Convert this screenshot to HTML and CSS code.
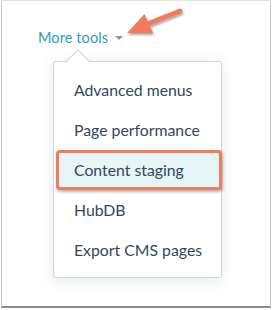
FILE: index.html
```html
<!DOCTYPE html>
<html lang="en">
<head>
    <meta charset="UTF-8">
    <title>More tools</title>
    <link rel="stylesheet" href="styles.css">
</head>
<body>
    <div class="frame">
        <div class="trigger">
            <span class="trigger-label">More tools</span>
            <span class="caret"></span>
        </div>
        <div class="dropdown">
            <ul class="menu">
                <li class="menu-item">Advanced menus</li>
                <li class="menu-item">Page performance</li>
                <li class="menu-item highlighted">Content staging</li>
                <li class="menu-item">HubDB</li>
                <li class="menu-item">Export CMS pages</li>
            </ul>
        </div>
        <!-- callout arrow pointing at the trigger -->
        <svg class="callout" width="272" height="60" viewBox="0 0 272 60">
            <defs>
                <filter id="shade" x="-20%" y="-20%" width="140%" height="160%">
                    <feDropShadow dx="1" dy="2" stdDeviation="1.2" flood-color="#000" flood-opacity="0.35"/>
                </filter>
            </defs>
            <g filter="url(#shade)">
                <line x1="180" y1="11" x2="146" y2="24.5" stroke="#f47a5c" stroke-width="5" stroke-linecap="round"/>
                <polygon points="127,33 144.5,14 153,33" fill="#f47a5c"/>
            </g>
        </svg>
    </div>
</body>
</html>
```

FILE: styles.css
```css
body {
    margin: 0;
    font-family: "Lato", "Open Sans", sans-serif;
    background: #fff;
}

.frame {
    position: relative;
    box-sizing: border-box;
    width: 270px;
    height: 308px;
    margin-left: 1px;
    border-left: 1px solid #c9c9c9;
    border-right: 1px solid #c9c9c9;
    border-top: 1px solid #e2e2e2;
    border-bottom: 2px solid #8c8c8c;
    background: #fff;
    padding: 26px 0 0 36px;
}

.trigger {
    display: flex;
    align-items: center;
    height: 20px;
}

.trigger-label {
    color: #2e9cb4;
    font-size: 14.5px;
    letter-spacing: 0.1px;
}

.caret {
    width: 0;
    height: 0;
    margin-left: 7px;
    margin-top: 2px;
    border-left: 4px solid transparent;
    border-right: 4px solid transparent;
    border-top: 4px solid #7c98b6;
}

.dropdown {
    position: relative;
    box-sizing: border-box;
    width: 169px;
    height: 217px;
    margin: 14px 0 0 15px;
    border: 1px solid #cbd6e2;
    border-radius: 3px;
    background: #fff;
    box-shadow: 0 2px 14px rgba(45, 62, 80, 0.12);
}

/* notch on top of the dropdown */
.dropdown::before {
    content: "";
    position: absolute;
    left: 15px;
    top: -9px;
    width: 17px;
    height: 17px;
    background: #fff;
    border-left: 1px solid #cbd6e2;
    border-top: 1px solid #cbd6e2;
    transform: rotate(45deg);
}

.menu {
    list-style: none;
    margin: 0;
    padding: 8px 0 0;
    position: relative;
}

.menu-item {
    height: 40px;
    line-height: 40px;
    padding-left: 20px;
    color: #33475b;
    font-size: 15.8px;
}

.highlighted {
    box-sizing: border-box;
    margin: 0 0 0 2px;
    width: 166px;
    line-height: 34px;
    padding-left: 15px;
    border: 3px solid #f47a5c;
    border-radius: 4px;
    background: #e5f5f8;
    box-shadow: 1px 2px 3px rgba(0, 0, 0, 0.3);
}

.callout {
    position: absolute;
    left: -2px;
    top: -1px;
    pointer-events: none;
}
```
